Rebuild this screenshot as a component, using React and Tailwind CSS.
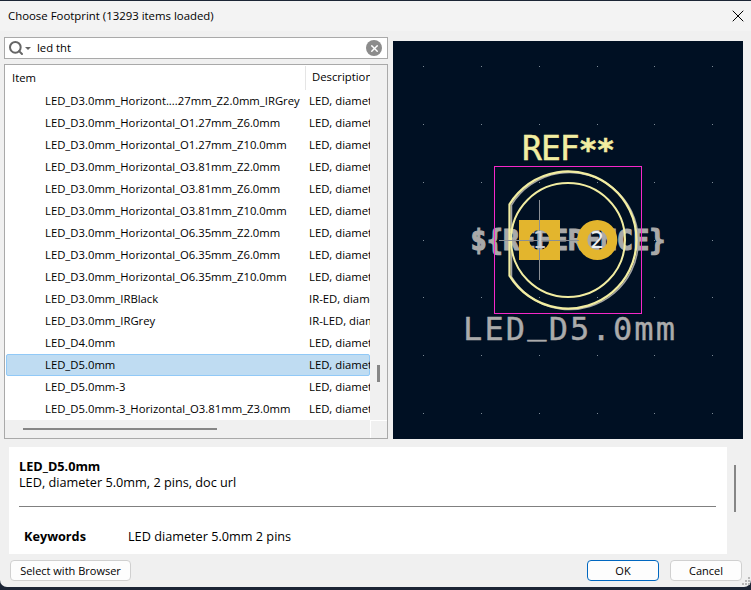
import React from 'react';
import { Search, X } from 'lucide-react';

const ROWS = [
  ['LED_D3.0mm_Horizont....27mm_Z2.0mm_IRGrey', 'LED, diameter 3.0mm'],
  ['LED_D3.0mm_Horizontal_O1.27mm_Z6.0mm', 'LED, diameter 3.0mm'],
  ['LED_D3.0mm_Horizontal_O1.27mm_Z10.0mm', 'LED, diameter 3.0mm'],
  ['LED_D3.0mm_Horizontal_O3.81mm_Z2.0mm', 'LED, diameter 3.0mm'],
  ['LED_D3.0mm_Horizontal_O3.81mm_Z6.0mm', 'LED, diameter 3.0mm'],
  ['LED_D3.0mm_Horizontal_O3.81mm_Z10.0mm', 'LED, diameter 3.0mm'],
  ['LED_D3.0mm_Horizontal_O6.35mm_Z2.0mm', 'LED, diameter 3.0mm'],
  ['LED_D3.0mm_Horizontal_O6.35mm_Z6.0mm', 'LED, diameter 3.0mm'],
  ['LED_D3.0mm_Horizontal_O6.35mm_Z10.0mm', 'LED, diameter 3.0mm'],
  ['LED_D3.0mm_IRBlack', 'IR-ED, diameter 3.0mm'],
  ['LED_D3.0mm_IRGrey', 'IR-LED, diameter 3.0mm'],
  ['LED_D4.0mm', 'LED, diameter 4.0mm'],
  ['LED_D5.0mm', 'LED, diameter 5.0mm', true],
  ['LED_D5.0mm-3', 'LED, diameter 5.0mm'],
  ['LED_D5.0mm-3_Horizontal_O3.81mm_Z3.0mm', 'LED, diameter 5.0mm'],
];

const GRID_X = [423, 481, 539, 597, 654, 712];
const GRID_Y = [66, 124, 182, 240, 297, 355, 413];

function FootprintPreview() {
  return (
    <svg className="block w-[350px] h-[398px]" viewBox="393 41 350 398">
      <rect x="393" y="41" width="350" height="398" fill="#001023" />
      {GRID_Y.map((y) =>
        GRID_X.map((x) => <rect key={x + '-' + y} x={x} y={y} width="1" height="1" fill="#7d8a96" />)
      )}

      {/* fab layer reference, sits below the pads */}
      <text x="568" y="250" textAnchor="middle" textLength="195" lengthAdjust="spacingAndGlyphs"
        fontFamily="'DejaVu Sans Mono'" fontWeight="700" fontSize="28" fill="#a9a9a9" stroke="#a9a9a9" strokeWidth="1.2">{'${REFERENCE}'}</text>
      <path d="M510.5 204 A68.5 68.5 0 1 1 510.5 276 Z" fill="none" stroke="#a3a3a3" strokeWidth="1.5" transform="translate(1 1)" />

      {/* silkscreen */}
      <path d="M509.5 204.4 A68.5 68.5 0 1 1 509.5 275.6 Z" fill="none" stroke="#f2eda1" strokeWidth="2.25" />
      <circle cx="568" cy="240" r="57" fill="none" stroke="#f2eda1" strokeWidth="2" />

      {/* pads */}
      <path fillRule="evenodd" fill="#e3b52d"
        d="M519 220 H560 V260 H519 Z M529.3 240 a10 10 0 1 0 20 0 a10 10 0 1 0 -20 0 Z" />
      <path fillRule="evenodd" fill="#e3b52d"
        d="M577.3 240 a20 20 0 1 0 40 0 a20 20 0 1 0 -40 0 Z M587.3 240 a10 10 0 1 0 20 0 a10 10 0 1 0 -20 0 Z" />

      {/* courtyard */}
      <rect x="494.5" y="166.5" width="147" height="147" fill="none" stroke="#f528c8" strokeWidth="1" />

      {/* anchor cross */}
      <path d="M539.5 200 V280 M499 240.5 H579" stroke="#8b8f94" strokeWidth="1" />

      <text x="539.5" y="248" textAnchor="middle" fontFamily="'DejaVu Sans Mono'" fontSize="23" fill="#c9ced3">1</text>
      <text x="597.3" y="248" textAnchor="middle" fontFamily="'DejaVu Sans Mono'" fontSize="23" fill="#eef0f2">2</text>

      <text x="568.5" y="160" textAnchor="middle" textLength="93" lengthAdjust="spacing"
        fontFamily="'DejaVu Sans Mono'" fontSize="33" fill="#f2eda1" stroke="#f2eda1" strokeWidth="0.5">
        REF<tspan fontWeight="700" fontSize="31">**</tspan>
      </text>
      <text x="569" y="340" textAnchor="middle" textLength="212" lengthAdjust="spacing"
        fontFamily="'DejaVu Sans Mono'" fontSize="32" fill="#ababab" stroke="#ababab" strokeWidth="0.4">
        LED<tspan dy="-6">_</tspan><tspan dy="6">D5.0mm</tspan>
      </text>
    </svg>
  );
}

function FootprintList() {
  return (
    <div className="w-[384px] h-[375px] border border-[#a9a9a9] bg-[#f0f0f0] flex flex-col">
      <div className="flex h-[355px]">
        <div className="w-[365px] bg-white overflow-hidden">
          <div className="flex h-[25px] items-center bg-white">
            <div className="w-[301px] pl-[7px] h-[24px] leading-[24px] border-r border-[#e5e5e5] shrink-0">Item</div>
            <div className="pl-[6px] whitespace-nowrap">Description</div>
          </div>
          {ROWS.map(([name, desc, selected]) => (
            <div
              key={name}
              className={
                'flex items-center h-[22px] whitespace-nowrap ' +
                (selected ? 'bg-[#bfdcf2] border border-[#91c9f7] rounded-[2px] ml-px' : '')
              }
            >
              <div className={'w-[264px] shrink-0 ' + (selected ? 'ml-[38px]' : 'ml-[40px]')}>{name}</div>
              <div>{desc}</div>
            </div>
          ))}
        </div>
        <div className="w-[17px] flex justify-center">
          <div className="w-[3px] h-[17px] mt-[300px] bg-[#868686]" />
        </div>
      </div>
      <div className="flex h-[18px] items-center">
        <div className="w-[365px] pl-[18px]">
          <div className="w-[194px] h-[2px] bg-[#868686]" />
        </div>
        <div className="w-[17px] h-[18px] border-l border-t border-white" />
      </div>
    </div>
  );
}

export default function App() {
  return (
    <div className="relative w-[751px] h-[590px] overflow-hidden bg-[#1c2535] pt-px font-['Open_Sans','Noto_Sans',sans-serif] text-[11.3px] text-black">
      <div className="h-[586px] bg-[#f0f0f0] rounded-b-[7px] flex flex-col">
        <div className="h-[30px] bg-[#f3f3f3] flex items-center justify-between pl-[8px] pr-[3px]">
          <span className="text-[11.4px]">Choose Footprint (13293 items loaded)</span>
          <X size={20} strokeWidth={1.2} />
        </div>

        <div className="flex pl-[4px] pt-[6px] h-[410px]">
          <div className="w-[384px] flex flex-col gap-[5px]">
            <div className="h-[22px] bg-white border border-[#a9a9a9] flex items-center pl-[3px] pr-[5px]">
              <Search size={16} strokeWidth={3} className="text-[#666666]" />
              <svg width="6" height="3" viewBox="0 0 6 3" className="ml-[1px]"><path d="M0 0H6L3 3Z" fill="#666666" /></svg>
              <span className="ml-[6px] flex-1">led tht</span>
              <span className="w-[16px] h-[16px] rounded-full bg-[#8c8c8c] flex items-center justify-center">
                <X size={11} strokeWidth={3} className="text-white" />
              </span>
            </div>
            <FootprintList />
          </div>
          <div className="ml-[5px] pt-[4px]">
            <FootprintPreview />
          </div>
        </div>

        <div className="flex pl-[9px] pt-[6px]">
          <div className="w-[718px] h-[107px] bg-white pl-[10px] pr-[11px] pt-[11px] text-[12.7px]">
            <div className="font-bold leading-[16px]">LED_D5.0mm</div>
            <div className="leading-[16px]">LED, diameter 5.0mm, 2 pins, doc url</div>
            <div className="h-px bg-[#808080] mt-[16px]" />
            <div className="flex mt-[21px] leading-[16px]">
              <div className="w-[109px] pl-[5px] font-bold">Keywords</div>
              <div>LED diameter 5.0mm 2 pins</div>
            </div>
          </div>
          <div className="ml-[7px] mt-[18px] w-[2px] h-[47px] bg-[#868686]" />
        </div>

        <div className="flex items-center pl-[10px] pr-[9px] pt-[6px] text-[11px]">
          <button className="w-[121px] h-[21px] pt-px bg-[#fdfdfd] border border-[#d0d0d0] rounded-[4px]">Select with Browser</button>
          <button className="ml-auto w-[72px] h-[21px] pt-px bg-[#fdfdfd] border border-[#0067c0] rounded-[4px]">OK</button>
          <button className="ml-[11px] w-[72px] h-[21px] pt-px bg-[#fdfdfd] border border-[#d0d0d0] rounded-[4px]">Cancel</button>
        </div>
      </div>

      {/* resize grip */}
      <svg className="absolute right-0 bottom-[4px]" width="9" height="9" viewBox="0 0 9 9" fill="#b8b8b8">
        <rect x="6" y="0" width="2" height="2" />
        <rect x="3" y="3" width="2" height="2" />
        <rect x="6" y="3" width="2" height="2" />
        <rect x="0" y="6" width="2" height="2" />
        <rect x="3" y="6" width="2" height="2" />
        <rect x="6" y="6" width="2" height="2" />
      </svg>
    </div>
  );
}
